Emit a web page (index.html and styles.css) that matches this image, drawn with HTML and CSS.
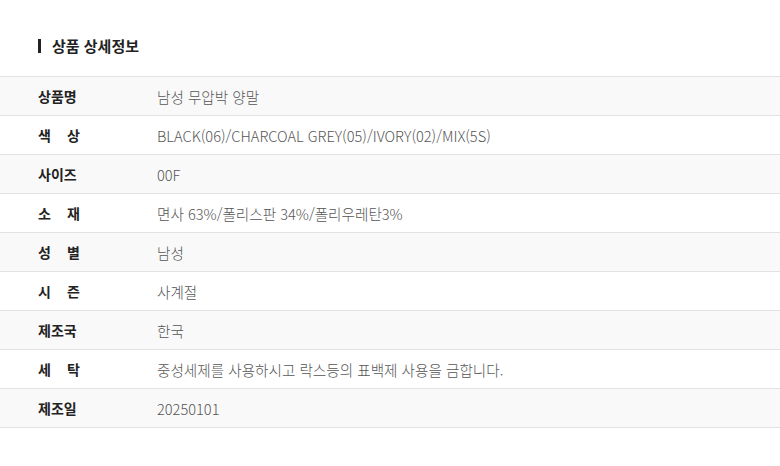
FILE: index.html
```html
<!DOCTYPE html>
<html lang="ko">
<head>
<meta charset="utf-8">
<link rel="stylesheet" href="styles.css">
</head>
<body>
<section class="detail">
  <h2 class="title">상품 상세정보</h2>
  <div class="table">
    <div class="row"><div class="label">상품명</div><div class="value">남성 무압박 양말</div></div>
    <div class="row"><div class="label"><span class="sp">색 상</span></div><div class="value">BLACK(06)/CHARCOAL GREY(05)/IVORY(02)/MIX(5S)</div></div>
    <div class="row"><div class="label">사이즈</div><div class="value">00F</div></div>
    <div class="row"><div class="label"><span class="sp">소 재</span></div><div class="value">면사 63%/폴리스판 34%/폴리우레탄3%</div></div>
    <div class="row"><div class="label"><span class="sp">성 별</span></div><div class="value">남성</div></div>
    <div class="row"><div class="label"><span class="sp">시 즌</span></div><div class="value">사계절</div></div>
    <div class="row"><div class="label">제조국</div><div class="value">한국</div></div>
    <div class="row"><div class="label"><span class="sp">세 탁</span></div><div class="value">중성세제를 사용하시고 락스등의 표백제 사용을 금합니다.</div></div>
    <div class="row"><div class="label">제조일</div><div class="value">20250101</div></div>
  </div>
</section>
</body>
</html>
```
FILE: styles.css
```css
html, body {
  margin: 0;
  padding: 0;
  background: #fff;
}
body {
  font-family: "Noto Sans CJK KR", "Noto Sans", sans-serif;
}
.detail {
  padding-top: 39px;
}
.title {
  margin: 0 0 23px 38px;
  padding-left: 11px;
  border-left: 3px solid #222;
  font-size: 15px;
  font-weight: 700;
  line-height: 14px;
  color: #222;
}
.table {
  border-top: 1px solid #e2e2e2;
}
.row {
  display: flex;
  align-items: center;
  height: 38px;
  border-bottom: 1px solid #e2e2e2;
}
.row:nth-child(odd) {
  background: #f9f9f9;
}
.label {
  width: 119px;
  flex: none;
  padding-left: 38px;
  font-size: 14px;
  font-weight: 700;
  color: #222;
}
.sp {
  display: inline-block;
  width: 42px;
  text-align: justify;
  text-align-last: justify;
}
.value {
  font-size: 14.6px;
  font-weight: 300;
  color: #555;
}
```
